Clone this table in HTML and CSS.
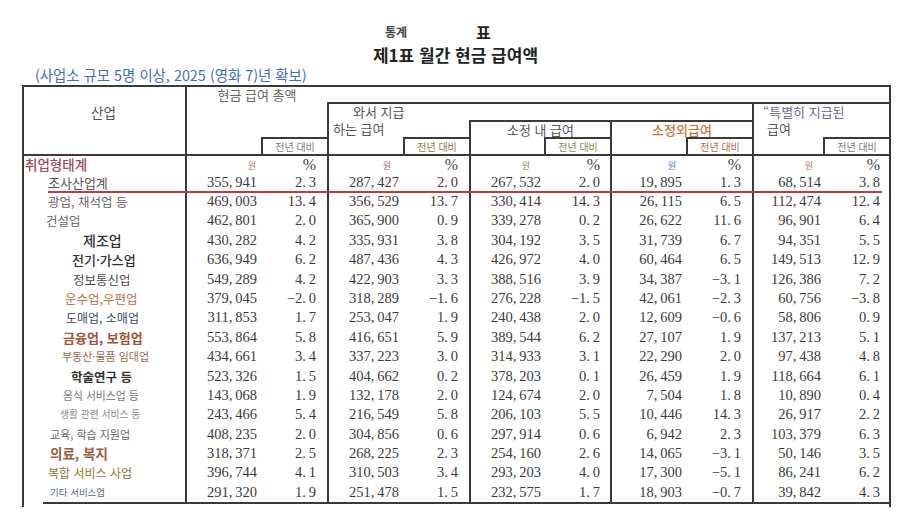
FILE: index.html
```html
<!DOCTYPE html>
<html lang="ko">
<head>
<meta charset="utf-8">
<title>제1표 월간 현금 급여액</title>
<link rel="stylesheet" href="styles.css">
</head>
<body>
<div class="page">
  <div class="kicker"><span class="k1">통계</span><span class="k2">표</span></div>
  <h1 class="title">제1표 월간 현금 급여액</h1>
  <p class="subtitle">(사업소 규모 5명 이상, 2025 (영화 7)년 확보)</p>

  <div class="tbl">
    <div class="thead">
      <div class="h-ind">산업</div>
      <div class="h-total"><span class="h-txt">현금 급여 총액</span><span class="yoy yoy-gray">전년 대비</span></div>
      <div class="h-blank"></div>
      <div class="h-paid"><span class="l1 paid1">와서 지급</span><span class="l2 paid2">하는 급여</span><span class="yoy yoy-olive">전년 대비</span></div>
      <div class="h-gap"></div>
      <div class="h-reg"><span class="h-txt">소정 내 급여</span><span class="yoy yoy-khaki">전년 대비</span></div>
      <div class="h-over"><span class="h-txt">소정외급여</span><span class="yoy yoy-orange">전년 대비</span></div>
      <div class="h-special"><span class="l1 spec1">“특별히 지급된</span><span class="l2 spec2">급여</span><span class="yoy yoy-gray">전년 대비</span></div>
    </div>

    <div class="row row-unit">
      <span class="lab lab-emp">취업형태계</span>
      <span class="n"><span class="won won-1">원</span></span><span class="p pc">%</span>
      <span class="n"><span class="won won-2">원</span></span><span class="p pc">%</span>
      <span class="n"><span class="won won-3">원</span></span><span class="p pc">%</span>
      <span class="n"><span class="won won-4">원</span></span><span class="p pc">%</span>
      <span class="n"><span class="won won-5">원</span></span><span class="p pc">%</span>
    </div>

    <div class="row row-sum">
      <span class="lab lab-sum">조사산업계</span>
      <span class="n">355,&#8201;941</span><span class="p">2.&#8201;3</span>
      <span class="n">287,&#8201;427</span><span class="p">2.&#8201;0</span>
      <span class="n">267,&#8201;532</span><span class="p">2.&#8201;0</span>
      <span class="n">19,&#8201;895</span><span class="p">1.&#8201;3</span>
      <span class="n">68,&#8201;514</span><span class="p">3.&#8201;8</span>
    </div>

    <div class="row">
      <span class="lab lab-mine">광업, 채석업 등</span>
      <span class="n">469,&#8201;003</span><span class="p">13.&#8201;4</span>
      <span class="n">356,&#8201;529</span><span class="p">13.&#8201;7</span>
      <span class="n">330,&#8201;414</span><span class="p">14.&#8201;3</span>
      <span class="n">26,&#8201;115</span><span class="p">6.&#8201;5</span>
      <span class="n">112,&#8201;474</span><span class="p">12.&#8201;4</span>
    </div>

    <div class="row">
      <span class="lab lab-cons">건설업</span>
      <span class="n">462,&#8201;801</span><span class="p">2.&#8201;0</span>
      <span class="n">365,&#8201;900</span><span class="p">0.&#8201;9</span>
      <span class="n">339,&#8201;278</span><span class="p">0.&#8201;2</span>
      <span class="n">26,&#8201;622</span><span class="p">11.&#8201;6</span>
      <span class="n">96,&#8201;901</span><span class="p">6.&#8201;4</span>
    </div>

    <div class="row">
      <span class="lab lab-manu">제조업</span>
      <span class="n">430,&#8201;282</span><span class="p">4.&#8201;2</span>
      <span class="n">335,&#8201;931</span><span class="p">3.&#8201;8</span>
      <span class="n">304,&#8201;192</span><span class="p">3.&#8201;5</span>
      <span class="n">31,&#8201;739</span><span class="p">6.&#8201;7</span>
      <span class="n">94,&#8201;351</span><span class="p">5.&#8201;5</span>
    </div>

    <div class="row">
      <span class="lab lab-elec">전기·가스업</span>
      <span class="n">636,&#8201;949</span><span class="p">6.&#8201;2</span>
      <span class="n">487,&#8201;436</span><span class="p">4.&#8201;3</span>
      <span class="n">426,&#8201;972</span><span class="p">4.&#8201;0</span>
      <span class="n">60,&#8201;464</span><span class="p">6.&#8201;5</span>
      <span class="n">149,&#8201;513</span><span class="p">12.&#8201;9</span>
    </div>

    <div class="row">
      <span class="lab lab-info">정보통신업</span>
      <span class="n">549,&#8201;289</span><span class="p">4.&#8201;2</span>
      <span class="n">422,&#8201;903</span><span class="p">3.&#8201;3</span>
      <span class="n">388,&#8201;516</span><span class="p">3.&#8201;9</span>
      <span class="n">34,&#8201;387</span><span class="p">−3.&#8201;1</span>
      <span class="n">126,&#8201;386</span><span class="p">7.&#8201;2</span>
    </div>

    <div class="row">
      <span class="lab lab-trans">운수업,우편업</span>
      <span class="n">379,&#8201;045</span><span class="p">−2.&#8201;0</span>
      <span class="n">318,&#8201;289</span><span class="p">−1.&#8201;6</span>
      <span class="n">276,&#8201;228</span><span class="p">−1.&#8201;5</span>
      <span class="n">42,&#8201;061</span><span class="p">−2.&#8201;3</span>
      <span class="n">60,&#8201;756</span><span class="p">−3.&#8201;8</span>
    </div>

    <div class="row">
      <span class="lab lab-trade">도매업, 소매업</span>
      <span class="n">311,&#8201;853</span><span class="p">1.&#8201;7</span>
      <span class="n">253,&#8201;047</span><span class="p">1.&#8201;9</span>
      <span class="n">240,&#8201;438</span><span class="p">2.&#8201;0</span>
      <span class="n">12,&#8201;609</span><span class="p">−0.&#8201;6</span>
      <span class="n">58,&#8201;806</span><span class="p">0.&#8201;9</span>
    </div>

    <div class="row">
      <span class="lab lab-fin">금융업, 보험업</span>
      <span class="n">553,&#8201;864</span><span class="p">5.&#8201;8</span>
      <span class="n">416,&#8201;651</span><span class="p">5.&#8201;9</span>
      <span class="n">389,&#8201;544</span><span class="p">6.&#8201;2</span>
      <span class="n">27,&#8201;107</span><span class="p">1.&#8201;9</span>
      <span class="n">137,&#8201;213</span><span class="p">5.&#8201;1</span>
    </div>

    <div class="row">
      <span class="lab lab-real">부동산·물품 임대업</span>
      <span class="n">434,&#8201;661</span><span class="p">3.&#8201;4</span>
      <span class="n">337,&#8201;223</span><span class="p">3.&#8201;0</span>
      <span class="n">314,&#8201;933</span><span class="p">3.&#8201;1</span>
      <span class="n">22,&#8201;290</span><span class="p">2.&#8201;0</span>
      <span class="n">97,&#8201;438</span><span class="p">4.&#8201;8</span>
    </div>

    <div class="row">
      <span class="lab lab-sci">학술연구 등</span>
      <span class="n">523,&#8201;326</span><span class="p">1.&#8201;5</span>
      <span class="n">404,&#8201;662</span><span class="p">0.&#8201;2</span>
      <span class="n">378,&#8201;203</span><span class="p">0.&#8201;1</span>
      <span class="n">26,&#8201;459</span><span class="p">1.&#8201;9</span>
      <span class="n">118,&#8201;664</span><span class="p">6.&#8201;1</span>
    </div>

    <div class="row">
      <span class="lab lab-food">음식 서비스업 등</span>
      <span class="n">143,&#8201;068</span><span class="p">1.&#8201;9</span>
      <span class="n">132,&#8201;178</span><span class="p">2.&#8201;0</span>
      <span class="n">124,&#8201;674</span><span class="p">2.&#8201;0</span>
      <span class="n">7,&#8201;504</span><span class="p">1.&#8201;8</span>
      <span class="n">10,&#8201;890</span><span class="p">0.&#8201;4</span>
    </div>

    <div class="row">
      <span class="lab lab-life">생활 관련 서비스 등</span>
      <span class="n">243,&#8201;466</span><span class="p">5.&#8201;4</span>
      <span class="n">216,&#8201;549</span><span class="p">5.&#8201;8</span>
      <span class="n">206,&#8201;103</span><span class="p">5.&#8201;5</span>
      <span class="n">10,&#8201;446</span><span class="p">14.&#8201;3</span>
      <span class="n">26,&#8201;917</span><span class="p">2.&#8201;2</span>
    </div>

    <div class="row">
      <span class="lab lab-edu">교육, 학습 지원업</span>
      <span class="n">408,&#8201;235</span><span class="p">2.&#8201;0</span>
      <span class="n">304,&#8201;856</span><span class="p">0.&#8201;6</span>
      <span class="n">297,&#8201;914</span><span class="p">0.&#8201;6</span>
      <span class="n">6,&#8201;942</span><span class="p">2.&#8201;3</span>
      <span class="n">103,&#8201;379</span><span class="p">6.&#8201;3</span>
    </div>

    <div class="row">
      <span class="lab lab-health">의료, 복지</span>
      <span class="n">318,&#8201;371</span><span class="p">2.&#8201;5</span>
      <span class="n">268,&#8201;225</span><span class="p">2.&#8201;3</span>
      <span class="n">254,&#8201;160</span><span class="p">2.&#8201;6</span>
      <span class="n">14,&#8201;065</span><span class="p">−3.&#8201;1</span>
      <span class="n">50,&#8201;146</span><span class="p">3.&#8201;5</span>
    </div>

    <div class="row">
      <span class="lab lab-compound">복합 서비스 사업</span>
      <span class="n">396,&#8201;744</span><span class="p">4.&#8201;1</span>
      <span class="n">310,&#8201;503</span><span class="p">3.&#8201;4</span>
      <span class="n">293,&#8201;203</span><span class="p">4.&#8201;0</span>
      <span class="n">17,&#8201;300</span><span class="p">−5.&#8201;1</span>
      <span class="n">86,&#8201;241</span><span class="p">6.&#8201;2</span>
    </div>

    <div class="row">
      <span class="lab lab-etc">기타 서비스업</span>
      <span class="n">291,&#8201;320</span><span class="p">1.&#8201;9</span>
      <span class="n">251,&#8201;478</span><span class="p">1.&#8201;5</span>
      <span class="n">232,&#8201;575</span><span class="p">1.&#8201;7</span>
      <span class="n">18,&#8201;903</span><span class="p">−0.&#8201;7</span>
      <span class="n">39,&#8201;842</span><span class="p">4.&#8201;3</span>
    </div>

    <div class="foot-line"></div>
  </div>
</div>
</body>
</html>
```

FILE: styles.css
```css
* { box-sizing: border-box; }

body {
  margin: 0;
  background: #ffffff;
  font-family: "Noto Sans CJK KR", "Noto Sans", sans-serif;
  color: #333;
}

.page {
  width: 900px;
  height: 513px;
  overflow: hidden;
}

/* ---------- titles ---------- */
.kicker {
  display: flex;
  align-items: center;
  height: 20px;
  margin-top: 22px;
  padding-left: 385px;
}
.k1 {
  font-size: 12px;
  font-weight: 700;
  line-height: 20px;
  color: #444;
}
.k2 {
  margin-left: 69px;
  font-size: 16px;
  font-weight: 700;
  line-height: 20px;
  color: #222;
}
.title {
  margin: 2px 0 0;
  height: 22px;
  line-height: 22px;
  font-size: 17px;
  font-weight: 700;
  text-align: center;
  padding-left: 11px;
  color: #222;
}
.subtitle {
  margin: 0;
  height: 18px;
  line-height: 18px;
  padding-left: 35px;
  font-size: 14.4px;
  color: #3e6fc2;
}

/* ---------- table frame ---------- */
.tbl {
  margin: 1px 0 0 22px;
  width: 869px;
  border: 2px solid #3a3a3a;
  border-bottom: 0;
  padding-bottom: 3px;
}

/* ---------- header ---------- */
.thead {
  display: grid;
  grid-template-columns: 161px 142px 142px 141px 142px 137px;
  grid-template-rows: 15px 18px 34px;
  border-bottom: 2px solid #3a3a3a;
  font-size: 13px;
  color: #555;
}
.thead > div {
  display: flex;
  flex-direction: column;
  min-width: 0;
}
.h-ind {
  grid-column: 1;
  grid-row: 1 / 4;
  padding-top: 16px;
  line-height: 18px;
  text-align: center;
  font-size: 13.5px;
  padding-right: 2px;
}
.h-total {
  grid-column: 2;
  grid-row: 1 / 4;
  border-left: 2px solid #3a3a3a;
  color: #666;
}
.h-total .h-txt {
  line-height: 16px;
  text-align: center;
}
.h-blank {
  grid-column: 3 / 7;
  grid-row: 1;
}
.h-paid {
  grid-column: 3;
  grid-row: 2 / 4;
  border-left: 2px solid #3a3a3a;
  border-top: 2px solid #3a3a3a;
}
.h-gap {
  grid-column: 4 / 6;
  grid-row: 2;
  border-top: 2px solid #3a3a3a;
}
.h-reg {
  grid-column: 4;
  grid-row: 3;
  border-left: 2px solid #3a3a3a;
  border-top: 2px solid #3a3a3a;
}
.h-over {
  grid-column: 5;
  grid-row: 3;
  border-left: 2px solid #3a3a3a;
  border-top: 2px solid #3a3a3a;
  color: #c8763a;
  font-weight: 500;
}
.h-special {
  grid-column: 6;
  grid-row: 2 / 4;
  border-left: 2px solid #3a3a3a;
  border-top: 2px solid #3a3a3a;
}
.h-reg .h-txt,
.h-over .h-txt {
  line-height: 15px;
  text-align: center;
}
.l1 { line-height: 16px; white-space: nowrap; }
.l2 { line-height: 17px; white-space: nowrap; }
.paid1 { padding-left: 24px; }
.paid2 { padding-left: 4px; }
.spec1 { padding-left: 9px; color: #6b6b96; }
.spec2 { padding-left: 13px; }

.yoy {
  margin-top: auto;
  align-self: flex-end;
  width: 66px;
  height: 17px;
  border-top: 2px solid #3a3a3a;
  border-left: 2px solid #3a3a3a;
  font-size: 10px;
  font-weight: 400;
  line-height: 15px;
  text-align: center;
}
.yoy-gray { color: #7a7a7a; }
.yoy-olive { color: #8c7a36; }
.yoy-khaki { color: #8e8a52; }
.yoy-orange { color: #b86a3c; }

/* ---------- body rows ---------- */
.row {
  display: grid;
  grid-template-columns: 161px 72px 70px 72px 70px 72px 69px 72px 70px 69px 68px;
  height: 19.4px;
  line-height: 19.4px;
  font-family: "Liberation Serif", "Times New Roman", serif;
  font-size: 14.5px;
  color: #3b3b3b;
}
.row-unit { height: 17px; line-height: 17px; }
.row-sum { height: 19px; line-height: 19px; position: relative; }
.row-sum::after {
  content: "";
  position: absolute;
  left: 24px;
  right: 7px;
  bottom: -1px;
  height: 2px;
  background: #d2323e;
}

.n {
  border-left: 2px solid #3a3a3a;
  text-align: right;
  white-space: nowrap;
}
.p {
  text-align: right;
  padding-right: 11px;
  white-space: nowrap;
}
.p:nth-child(7) { padding-right: 10px; }
.p:nth-child(11) { padding-right: 9px; }

.pc { font-size: 16px; color: #444; }
.won {
  font-family: "Noto Sans CJK KR", sans-serif;
  font-size: 9px;
}
.won-1 { color: #c07070; padding-right: 1px; }
.won-2 { color: #c05a5a; padding-right: 8px; }
.won-3 { color: #8a8a6a; padding-right: 11px; }
.won-4 { color: #4a7ac8; padding-right: 6px; }
.won-5 { color: #c06a6a; padding-right: 8px; }

.lab {
  font-family: "Noto Sans CJK KR", "Noto Sans", sans-serif;
  white-space: nowrap;
}
.lab-emp { padding-left: 1px; font-size: 13.5px; color: #a4485c; font-weight: 500; }
.lab-sum { padding-left: 24px; font-size: 13px; color: #555; }
.lab-mine { padding-left: 24px; font-size: 12.5px; color: #666; }
.lab-cons { padding-left: 22px; font-size: 12.5px; color: #666; }
.lab-manu { padding-left: 59px; font-size: 14px; color: #333; font-weight: 500; }
.lab-elec { padding-left: 48px; font-size: 13px; color: #333; font-weight: 500; }
.lab-info { padding-left: 49px; font-size: 12.5px; color: #4a4a4a; }
.lab-trans { padding-left: 41px; font-size: 12.5px; color: #c0703c; }
.lab-trade { padding-left: 42px; font-size: 12px; color: #3d4a62; }
.lab-fin { padding-left: 39px; font-size: 13px; color: #a5503a; font-weight: 700; }
.lab-real { padding-left: 38px; font-size: 11px; color: #a06a4a; }
.lab-sci { padding-left: 47px; font-size: 12.5px; color: #333; font-weight: 700; }
.lab-food { padding-left: 39px; font-size: 10.8px; color: #777; }
.lab-life { padding-left: 36px; font-size: 9.8px; color: #888; }
.lab-edu { padding-left: 26px; font-size: 11px; color: #666; }
.lab-health { padding-left: 26px; font-size: 13.5px; color: #a05a3a; font-weight: 700; }
.lab-compound { padding-left: 24px; font-size: 12px; color: #8a7a30; }
.lab-etc { padding-left: 26px; font-size: 9.5px; color: #5a6a8a; }

.foot-line {
  height: 2px;
  margin-left: 19px;
  background: #3a3a3a;
}
```
